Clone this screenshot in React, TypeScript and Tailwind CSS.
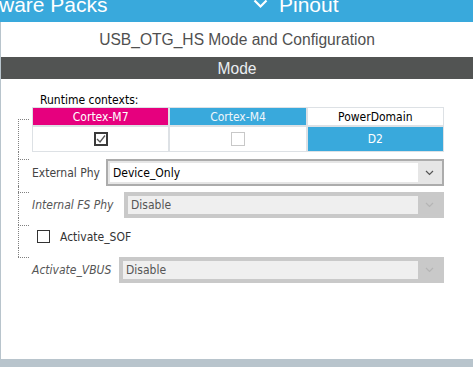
import React from "react";

const small = "font-['DejaVu_Sans_Condensed','Liberation_Sans',sans-serif] text-[12px]";

function Chevron({ color }: { color: string }) {
  return (
    <svg width="9" height="6" viewBox="0 0 9 6" fill="none">
      <polyline points="1,1 4.5,4.5 8,1" stroke={color} strokeWidth="1.2" />
    </svg>
  );
}

function Select({ value, disabled }: { value: string; disabled?: boolean }) {
  return (
    <div
      className={
        "flex flex-1 h-full border-2 p-[2px] " +
        (disabled ? "border-[#c9c9c9] bg-[#c9c9c9]" : "border-[#acacac] bg-[#e6e6e6]")
      }
    >
      <div
        className={
          "flex flex-1 items-center pl-[3px] " +
          (disabled ? "bg-[#efefef] text-[#555]" : "bg-white text-black")
        }
      >
        {value}
      </div>
      <div
        className={
          "flex w-[22px] items-center justify-center " + (disabled ? "bg-[#c9c9c9]" : "bg-[#e6e6e6]")
        }
      >
        <Chevron color={disabled ? "#b5b5b5" : "#555"} />
      </div>
    </div>
  );
}

// one branch of the dotted tree: gutter with the connector, then content
function Branch({
  top,
  first,
  last,
  children,
}: {
  top: number;
  first?: boolean;
  last?: boolean;
  children: React.ReactNode;
}) {
  return (
    <div className="flex">
      <div className="ml-[17px] flex w-[11px] shrink-0 flex-col">
        <div
          className={first ? "" : "border-l border-dotted border-[#808080]"}
          style={{ height: top }}
        />
        <div
          className={
            "flex-1 border-t border-dotted border-[#808080] " +
            (last ? "" : "border-l")
          }
        />
      </div>
      <div className="ml-[3px] w-[412px]" style={{ paddingTop: first ? 0 : top }}>
        {children}
      </div>
    </div>
  );
}

export default function App() {
  return (
    <div className="flex h-[367px] w-[473px] flex-col overflow-hidden bg-white font-['Liberation_Sans',Arial,sans-serif]">
      {/* top toolbar, clipped by the viewport */}
      <div className="h-[22px] shrink-0 overflow-hidden bg-[#39a9dc] text-white">
        <div className="-mt-[6px] flex text-[21px] leading-[21px]">
          <span className="-ml-[1px] w-[254px]">ware Packs</span>
          <span className="mt-[5px] w-[26px]">
            <svg width="15" height="10" viewBox="0 0 15 10" fill="none">
              <polyline points="1.5,1.5 7.5,7.5 13.5,1.5" stroke="white" strokeWidth="2.2" />
            </svg>
          </span>
          <span>Pinout</span>
        </div>
      </div>

      <div className="flex flex-1 flex-col border-l border-[#b8c4cc]">
        <div className="flex h-[35px] items-center justify-center pt-px text-[15.6px] text-[#505050]">
          USB_OTG_HS Mode and Configuration
        </div>
        <div className="flex h-[22px] items-center justify-center pt-px text-[15.6px] bg-[#525453] text-[#eaeef2]">
          Mode
        </div>

        <div className={small + " text-black"}>
          <div className="ml-[39px] mt-[14px] h-[14px] leading-[14px]">Runtime contexts:</div>

          <Branch top={12} first>
            <div className="grid grid-cols-3 gap-[2px] bg-[#dde1e5] p-px">
              <div className="flex h-[17px] items-center justify-center bg-[#e6007e] text-white">
                Cortex-M7
              </div>
              <div className="flex h-[17px] items-center justify-center bg-[#39a9dc] text-[#eef6fb]">
                Cortex-M4
              </div>
              <div className="flex h-[17px] items-center justify-center bg-white text-black">
                PowerDomain
              </div>
              <div className="flex h-[24px] items-center justify-center bg-white">
                <div className="flex h-[14px] w-[14px] items-center justify-center border-2 border-[#3a3a3a]">
                  <svg width="10" height="10" viewBox="0 0 10 10" fill="none">
                    <polyline points="1,5 4,8 9,1.5" stroke="#555" strokeWidth="1.3" />
                  </svg>
                </div>
              </div>
              <div className="flex h-[24px] items-center justify-center bg-white">
                <div className="h-[14px] w-[14px] border border-[#c8c8c8]" />
              </div>
              <div className="flex h-[24px] items-center justify-center bg-[#39a9dc] text-white">
                D2
              </div>
            </div>
          </Branch>

          <Branch top={7}>
            <div className="flex h-[27px] items-center">
              <span className="w-[74px] text-[#444]">External Phy</span>
              <Select value="Device_Only" />
            </div>
          </Branch>

          <Branch top={6}>
            <div className="flex h-[26px] items-center">
              <span className="w-[92px] italic text-[#555]">Internal FS Phy</span>
              <Select value="Disable" disabled />
            </div>
          </Branch>

          <Branch top={7}>
            <div className="flex h-[23px] items-center">
              <div className="ml-[5px] h-[13px] w-[13px] border-[1.5px] border-[#333]" />
              <span className="ml-[10px] text-[#333]">Activate_SOF</span>
            </div>
          </Branch>

          <Branch top={9} last>
            <div className="flex h-[26px] items-center">
              <span className="w-[87px] italic text-[#555]">Activate_VBUS</span>
              <Select value="Disable" disabled />
            </div>
          </Branch>
        </div>
      </div>

      <div className="h-[8px] shrink-0 bg-[#b8c4cc]" />
    </div>
  );
}
